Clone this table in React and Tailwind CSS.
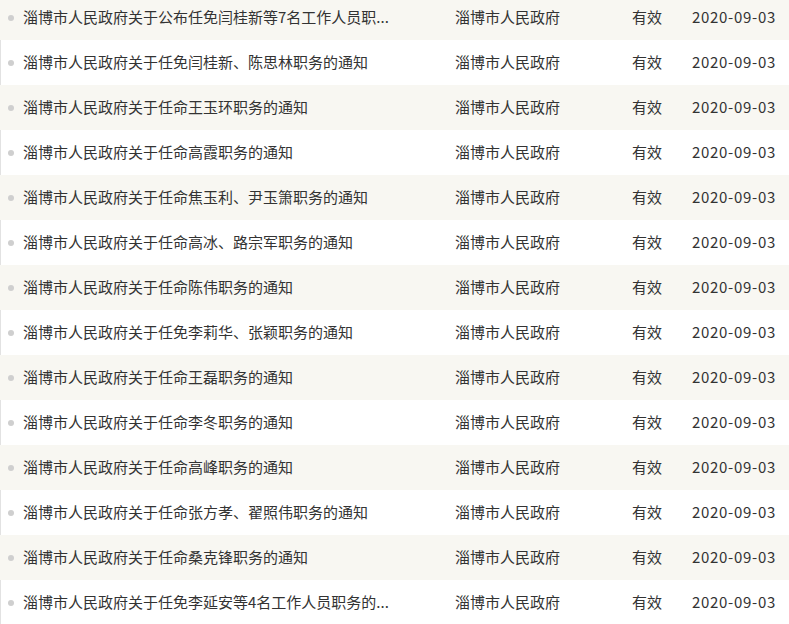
const rows = [
  "淄博市人民政府关于公布任免闫桂新等7名工作人员职...",
  "淄博市人民政府关于任免闫桂新、陈思林职务的通知",
  "淄博市人民政府关于任命王玉环职务的通知",
  "淄博市人民政府关于任命高霞职务的通知",
  "淄博市人民政府关于任命焦玉利、尹玉箫职务的通知",
  "淄博市人民政府关于任命高冰、路宗军职务的通知",
  "淄博市人民政府关于任命陈伟职务的通知",
  "淄博市人民政府关于任免李莉华、张颖职务的通知",
  "淄博市人民政府关于任命王磊职务的通知",
  "淄博市人民政府关于任命李冬职务的通知",
  "淄博市人民政府关于任命高峰职务的通知",
  "淄博市人民政府关于任命张方孝、翟照伟职务的通知",
  "淄博市人民政府关于任命桑克锋职务的通知",
  "淄博市人民政府关于任免李延安等4名工作人员职务的...",
]

export default function App() {
  return (
    <div
      className="w-[789px] h-[624px] overflow-hidden bg-white text-[15px] text-[#333]"
      style={{ fontFamily: '"Microsoft YaHei", "Noto Sans CJK SC", sans-serif' }}
    >
      <ul className="mt-[-5px]">
        {rows.map((title, i) => (
          <li
            key={i}
            className={`flex items-center h-[45px] ${
              i % 2 === 0 ? "bg-[#f8f7f2]" : "bg-white border-l border-[#e2e2e2]"
            }`}
          >
            <span className={`flex justify-center w-[23px] shrink-0 ${i % 2 === 0 ? "" : "-ml-px"}`}>
              <span className="w-[6px] h-[6px] rounded-full bg-[#cfcfcf] -ml-[1px]" />
            </span>
            <span className="w-[432px] shrink-0 whitespace-nowrap overflow-hidden">{title}</span>
            <span className="w-[177px] shrink-0">淄博市人民政府</span>
            <span className="w-[60px] shrink-0">有效</span>
            <span className="whitespace-nowrap tracking-[0.7px]">2020-09-03</span>
          </li>
        ))}
      </ul>
    </div>
  )
}
